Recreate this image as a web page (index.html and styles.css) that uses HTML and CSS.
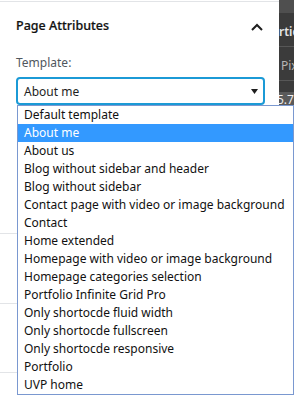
FILE: index.html
```html
<!DOCTYPE html>
<html lang="en">
<head>
    <meta charset="UTF-8">
    <meta name="viewport" content="width=device-width, initial-scale=1.0">
    <title>Page Attributes</title>
    <link rel="stylesheet" href="styles.css">
</head>
<body>
    <div class="screen">
        <div class="sidebar">
            <div class="panel">
                <div class="panel-header">
                    <h2 class="panel-title">Page Attributes</h2>
                    <svg class="chevron" width="12" height="8" viewBox="0 0 12 8">
                        <polyline points="1,7 6,2 11,7" fill="none" stroke="#1e1e1e" stroke-width="2"/>
                    </svg>
                </div>
                <div class="panel-body">
                    <label class="field-label">Template:</label>
                    <div class="select-box">
                        <span class="select-value">About me</span>
                        <svg class="select-arrow" width="7" height="5" viewBox="0 0 7 5">
                            <polygon points="0,0 7,0 3.5,5" fill="#1e1e1e"/>
                        </svg>
                    </div>
                </div>
            </div>
            <!-- panels hidden behind the open popup -->
            <div class="section first"></div>
            <div class="section second"></div>
            <div class="section third"></div>
        </div>
        <div class="dark-strip">
            <div class="strip-top"></div>
            <div class="strip-row bold">rties</div>
            <div class="strip-row dim">Pix</div>
            <div class="strip-value">5.7</div>
        </div>

        <!-- open select popup -->
        <ul class="dropdown">
            <li>Default template</li>
            <li class="selected">About me</li>
            <li>About us</li>
            <li>Blog without sidebar and header</li>
            <li>Blog without sidebar</li>
            <li>Contact page with video or image background</li>
            <li>Contact</li>
            <li>Home extended</li>
            <li>Homepage with video or image background</li>
            <li>Homepage categories selection</li>
            <li>Portfolio Infinite Grid Pro</li>
            <li>Only shortocde fluid width</li>
            <li>Only shortocde fullscreen</li>
            <li>Only shortocde responsive</li>
            <li>Portfolio</li>
            <li>UVP home</li>
        </ul>
    </div>
</body>
</html>
```
FILE: styles.css
```css
body {
    margin: 0;
    font-family: 'Noto Sans', sans-serif;
    font-size: 12px;
    line-height: 18px;
    color: #1e1e1e;
    background: #fff;
    overflow: hidden;
}

.screen {
    position: relative;
    display: flex;
    width: 294px;
    height: 395px;
    overflow: hidden;
}

.sidebar {
    width: 279px;
    flex-shrink: 0;
    background: #fff;
}

.panel {
    margin-top: 1px;
    border-top: 1px solid #e2e4e7;
}

.panel-header {
    display: flex;
    justify-content: space-between;
    align-items: center;
    padding: 15px 16px 0 16px;
}

.panel-title {
    margin: 0;
    font-size: 12.5px;
    font-weight: 500;
    line-height: 18px;
    color: #111;
    -webkit-text-stroke: 0.2px #111;
}

.chevron {
    display: block;
    margin-top: 1px;
}

.panel-body {
    padding: 19px 16px 128px 16px;
}

.field-label {
    display: block;
    color: #50575e;
    margin-bottom: 5px;
}

.select-box {
    display: flex;
    justify-content: space-between;
    align-items: center;
    width: 249px;
    height: 28px;
    box-sizing: border-box;
    border: 2px solid #1b9ad6;
    border-radius: 4px;
    padding: 0 5px 0 6px;
}

.select-value {
    color: #1e1e1e;
    padding-top: 1px;
}

.select-arrow {
    display: block;
}

.section {
    border-top: 1px solid #e2e4e7;
}

.section.first {
    height: 69px;
}

.section.second {
    height: 68px;
}

.section.third {
    height: 40px;
}

.dark-strip {
    flex: 1;
    background: #3b3b3b;
    color: #ddd;
    overflow: hidden;
    white-space: nowrap;
}

.strip-top {
    height: 13px;
    background: #4f4f4f;
}

.strip-row {
    height: 33px;
    line-height: 37px;
    border-bottom: 1px solid #575757;
}

.strip-row.bold {
    font-weight: 600;
    color: #e6e6e6;
}

.strip-row.dim {
    color: #b5b5b5;
    padding-left: 2px;
}

.strip-value {
    margin-top: 11px;
    height: 13px;
    line-height: 15px;
    background: #5a5a5a;
    color: #eee;
    margin-left: -2px;
}

.dropdown {
    position: absolute;
    left: 17px;
    top: 105px;
    width: 277px;
    box-sizing: border-box;
    margin: 0;
    padding: 0;
    list-style: none;
    background: #fff;
    border: 1px solid #7a98d0;
    color: #111;
}

.dropdown li {
    height: 18px;
    line-height: 18px;
    padding-left: 6px;
    white-space: nowrap;
}

.dropdown li.selected {
    background: #3399ff;
    color: #fff;
}
```
